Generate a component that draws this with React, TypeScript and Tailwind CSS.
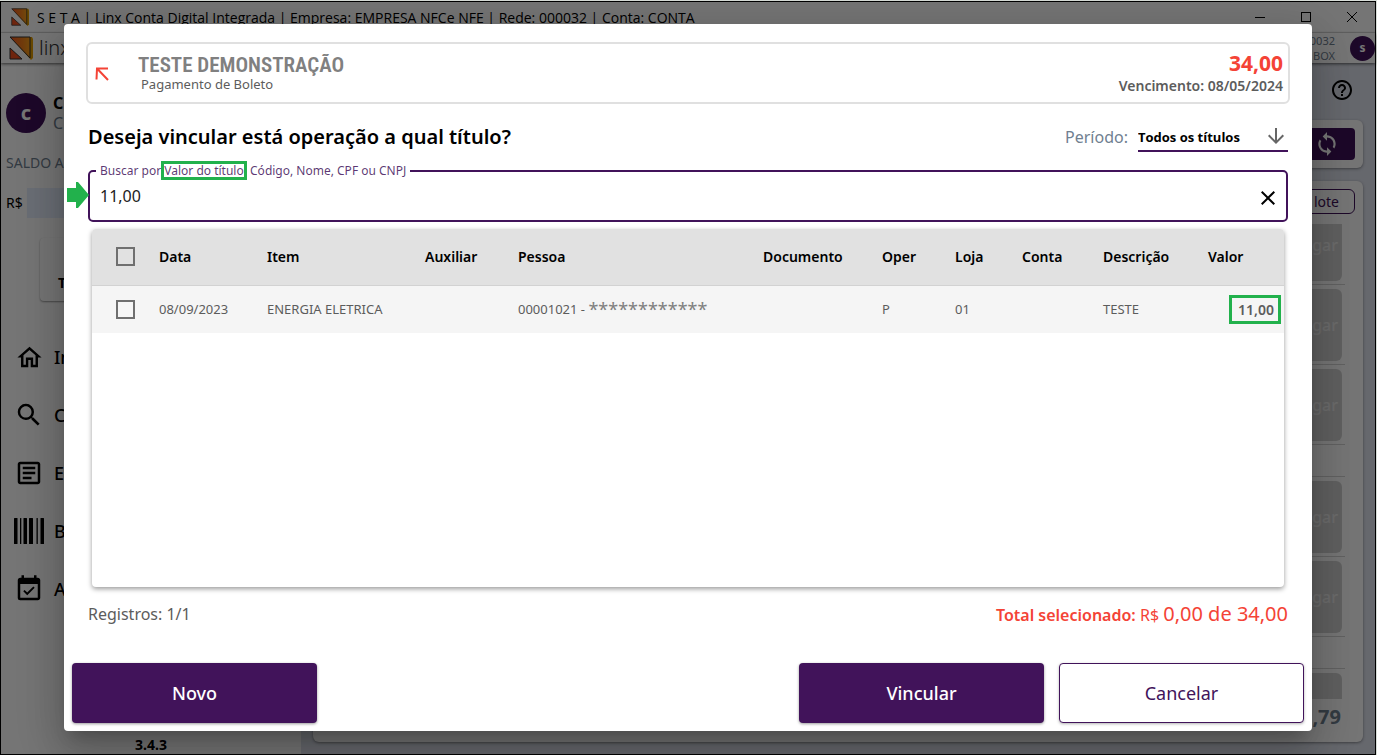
import { useState } from "react";
import {
  MdArrowDownward,
  MdClose,
  MdEventAvailable,
  MdHelpOutline,
  MdOutlineArticle,
  MdOutlineHome,
  MdSearch,
  MdSync,
} from "react-icons/md";

function LinxLogo({ className }: { className: string }) {
  return (
    <svg viewBox="0 0 24 24" className={className} aria-hidden="true">
      <defs>
        <linearGradient id="linx" x1="0" y1="0" x2="1" y2="0">
          <stop offset="0" stopColor="#f0501e" />
          <stop offset="1" stopColor="#f9a01b" />
        </linearGradient>
      </defs>
      <path d="M3 1H23L24 3V22L22 24L3 3Z" fill="#e8a000" />
      <path d="M1 1H21V22Z" fill="url(#linx)" stroke="#333" strokeWidth="1" />
      <path d="M1 12L13 23H1Z" fill="#f0501e" stroke="#333" strokeWidth="1" />
    </svg>
  );
}

function BarcodeIcon() {
  return (
    <svg width="30" height="26" viewBox="0 0 30 26" fill="currentColor" aria-hidden="true">
      <rect x="0" width="3.5" height="26" rx="0.5" />
      <rect x="6" width="1.3" height="26" rx="0.5" />
      <rect x="9.5" width="3.5" height="26" rx="0.5" />
      <rect x="15" width="4" height="26" rx="0.5" />
      <rect x="22.5" width="1.3" height="26" rx="0.5" />
      <rect x="26.5" width="3.5" height="26" rx="0.5" />
    </svg>
  );
}

function TitleBar() {
  return (
    <header className="flex h-[31px] shrink-0 items-center border-b border-[#e4e4e4] bg-white pl-[10px]">
      <LinxLogo className="size-[18px]" />
      <span className="ml-2 pt-[2px] font-['Open_Sans',sans-serif] text-sm whitespace-nowrap text-black">
        S E T A | Linx Conta Digital Integrada | Empresa: EMPRESA NFCe NFE | Rede: 000032 | Conta: CONTA
      </span>
      <div className="ml-auto flex">
        <button aria-label="Minimizar" className="grid h-[30px] w-[46px] place-items-center">
          <svg width="12" height="12" stroke="#000" fill="none"><path d="M1 6.5H11" /></svg>
        </button>
        <button aria-label="Maximizar" className="grid h-[30px] w-[46px] place-items-center">
          <svg width="12" height="12" stroke="#000" fill="none"><rect x="1.5" y="1.5" width="9" height="9" /></svg>
        </button>
        <button aria-label="Fechar" className="grid h-[30px] w-[46px] place-items-center">
          <svg width="12" height="12" stroke="#000" fill="none"><path d="M1 1L11 11M11 1L1 11" /></svg>
        </button>
      </div>
    </header>
  );
}

function AppBar() {
  return (
    <div className="z-10 flex h-[30px] shrink-0 items-center bg-white pl-2 shadow-[0_1px_3px_rgba(0,0,0,0.6)]">
      <LinxLogo className="size-6" />
      <span className="ml-[6px] text-xl font-light text-[#333]">linx</span>
      <div className="ml-auto text-right text-[11px] leading-[15px] text-[#708090]">
        <div>000032</div>
        <div>BOX</div>
      </div>
      <span className="ml-[15px] grid size-[25px] place-items-center rounded-full bg-[#41135a] text-xs font-bold text-white">
        s
      </span>
    </div>
  );
}

const menu = [
  { label: "In", icon: <MdOutlineHome size={29} /> },
  { label: "C", icon: <MdSearch size={30} /> },
  { label: "E", icon: <MdOutlineArticle size={30} /> },
  { label: "B", icon: <BarcodeIcon /> },
  { label: "A", icon: <MdEventAvailable size={30} /> },
];

function Sidebar() {
  return (
    <aside className="flex w-[300px] shrink-0 flex-col bg-white shadow-[1px_0_3px_rgba(0,0,0,0.35)]">
      <div className="mt-[30px] ml-[5px] flex items-center">
        <span className="grid size-10 place-items-center rounded-full bg-[#41135a] text-xl font-bold text-white">c</span>
        <div className="ml-[7px] leading-5">
          <div className="font-bold text-black">C</div>
          <div className="text-base leading-5 text-[#708090]">C</div>
        </div>
      </div>
      <div className="mt-5 ml-[5px] text-sm leading-5 text-[#708090]">SALDO A</div>
      <div className="mt-[15px] ml-[5px] flex items-center text-sm">
        <span className="w-[21px]">R$</span>
        <span className="h-[30px] w-48 bg-[#e8f0fe]" />
      </div>
      <div className="mt-5 ml-[39px] flex h-[63px] w-[220px] items-end rounded bg-white pb-2 pl-[18px] text-sm font-bold shadow-[0_1px_2px_rgba(0,0,0,0.4)]">
        T
      </div>
      <nav className="mt-[27px] flex flex-col">
        {menu.map((item) => (
          <a key={item.label} href="#" className="flex h-[58px] items-center pl-[13px] text-black">
            <span className="grid w-[30px] place-items-center">{item.icon}</span>
            <span className="ml-[10px] text-lg font-medium">{item.label}</span>
          </a>
        ))}
      </nav>
      <div className="mt-auto text-center text-sm leading-[18px] font-bold text-black">3.4.3</div>
    </aside>
  );
}

function PayRow() {
  return (
    <div className="mr-[18px] flex h-20 items-center justify-end border-b border-[#d4d4d4] pr-[3px]">
      <button className="h-[72px] w-24 rounded-md bg-[#d2d2d2] pr-1 text-right text-base font-medium text-[#ebebeb]">
        Pagar
      </button>
    </div>
  );
}

function MainArea() {
  return (
    <main className="flex min-w-0 flex-1 flex-col bg-[#dee2ed] pr-3 pb-3 pl-3">
      <div className="flex h-[57px] shrink-0 items-center justify-end pr-[9px] pb-1">
        <MdHelpOutline size={24} />
      </div>
      <div className="flex h-12 shrink-0 items-center justify-end rounded-md bg-white pr-2 shadow-[0_1px_3px_rgba(0,0,0,0.4)]">
        <button aria-label="Atualizar" className="grid h-8 w-14 place-items-center rounded bg-[#41135a] text-white">
          <MdSync size={26} />
        </button>
      </div>
      <section className="mt-[13px] flex min-h-0 flex-1 flex-col rounded-md bg-white shadow-[0_1px_3px_rgba(0,0,0,0.4)]">
        <div className="flex justify-end pt-2 pr-2">
          <button className="h-[25px] w-24 rounded-md border border-[#41135a] pr-[15px] text-right text-sm text-[#41135a]">
            lote
          </button>
        </div>
        <div className="mt-[10px] min-h-0 flex-1 overflow-hidden">
          <div className="-mt-[19px]">
            <PayRow />
            <PayRow />
            <PayRow />
            <div className="mr-[18px] h-8 border-b border-[#d4d4d4]" />
            <PayRow />
            <PayRow />
            <div className="mr-[18px] h-8 border-b border-[#d4d4d4]" />
            <div className="mr-[21px] ml-auto mt-1 h-[72px] w-24 rounded-md bg-[#d2d2d2]" />
          </div>
        </div>
        <div className="h-[43px] pr-[22px] text-right text-xl leading-9 font-bold text-[#708090]">,79</div>
      </section>
    </main>
  );
}

const headings = ["Data", "Item", "Auxiliar", "Pessoa", "Documento", "Oper", "Loja", "Conta", "Descrição", "Valor"];

const checkbox =
  "block size-[19px] appearance-none border-2 border-[#6f6f6f] checked:bg-[#41135a]";

function TitlesTable() {
  return (
    <div className="mx-1 mt-[7px] min-h-0 flex-1 overflow-hidden rounded-[4px] bg-white shadow-[0_2px_5px_rgba(0,0,0,0.4)]">
      <table className="w-full table-fixed border-collapse text-left text-[13px]">
        <colgroup>
          <col className="w-[67px]" />
          <col className="w-[108px]" />
          <col className="w-[158px]" />
          <col className="w-[93px]" />
          <col />
          <col className="w-[119px]" />
          <col className="w-[73px]" />
          <col className="w-[67px]" />
          <col className="w-[81px]" />
          <col className="w-[105px]" />
          <col className="w-[76px]" />
        </colgroup>
        <thead>
          <tr className="h-14 border-b border-[#d2d2d2] bg-[#e1e1e1] text-black">
            <th className="pl-6">
              <input type="checkbox" aria-label="Selecionar todos" className={checkbox} />
            </th>
            {headings.map((h) => (
              <th key={h} className="text-sm font-semibold">{h}</th>
            ))}
          </tr>
        </thead>
        <tbody>
          <tr className="h-12 bg-[#f5f5f5] text-[#5c5c5c]">
            <td className="pl-6">
              <input type="checkbox" aria-label="Selecionar título" className={checkbox} />
            </td>
            <td>08/09/2023</td>
            <td>ENERGIA ELETRICA</td>
            <td />
            <td className="whitespace-nowrap">
              <span className="flex items-center">
                00001021 -&nbsp;<span className="text-lg leading-5 text-[#808080]">************</span>
              </span>
            </td>
            <td />
            <td>P</td>
            <td>01</td>
            <td />
            <td>TESTE</td>
            <td className="pr-[3px]">
              <span className="ml-auto block w-[52px] border-3 border-[#22b14c] pr-1 text-right text-sm leading-[23px] font-semibold">
                11,00
              </span>
            </td>
          </tr>
        </tbody>
      </table>
    </div>
  );
}

function LinkDialog() {
  const [query, setQuery] = useState("11,00");
  return (
    <div
      role="dialog"
      aria-modal="true"
      className="flex w-full flex-col rounded bg-white shadow-[0_11px_15px_-7px_rgba(0,0,0,0.2),0_24px_38px_3px_rgba(0,0,0,0.14),0_9px_46px_8px_rgba(0,0,0,0.12)]"
    >
      <div className="mx-[22px] mt-[18px] flex h-[62px] shrink-0 items-center rounded-md border-2 border-[#e0e0e0] pt-[2px] pr-[5px] pl-[7px]">
        <svg width="14" height="14" fill="none" stroke="#f44336" strokeWidth="2" aria-hidden="true">
          <path d="M1.5 12.5L2 1.5H13M2 1.5L13 13" />
        </svg>
        <div className="ml-[29px]">
          <div className="font-['Roboto_Condensed','Liberation_Sans_Narrow',sans-serif] text-[21px] leading-5 font-semibold text-[#808080]">
            TESTE DEMONSTRAÇÃO
          </div>
          <div className="ml-[3px] text-[13px] leading-[18px] text-[#5c5c5c]">Pagamento de Boleto</div>
        </div>
        <div className="ml-auto text-right">
          <div className="text-[21px] leading-6 font-bold text-[#f44336]">34,00</div>
          <div className="text-sm leading-[22px] font-semibold text-[#5c5c5c]">Vencimento: 08/05/2024</div>
        </div>
      </div>

      <div className="mx-6 flex h-[66px] shrink-0 items-center justify-between">
        <h1 className="text-xl font-semibold text-black">Deseja vincular está operação a qual título?</h1>
        <div className="flex items-center">
          <label htmlFor="periodo" className="text-base text-[#708090]">Período:</label>
          <div className="relative ml-[10px] w-[150px] border-b-2 border-[#41135a]">
            <select
              id="periodo"
              className="h-[28px] w-full appearance-none bg-transparent pt-[3px] font-['Open_Sans',sans-serif] text-[13px] font-bold text-black outline-none"
            >
              <option>Todos os títulos</option>
            </select>
            <MdArrowDownward size={24} className="pointer-events-none absolute top-0.5 right-0 text-[#666]" />
          </div>
        </div>
      </div>

      <div className="relative mx-6 flex h-[52px] shrink-0 items-center rounded-[5px] border-2 border-[#41135a] pl-[10px] pr-[6px]">
        <label
          htmlFor="busca"
          className="absolute -top-[10px] left-[6px] bg-white px-1 text-xs leading-[18px] whitespace-nowrap text-[#41135a]/85"
        >
          Buscar por{" "}
          <span className="relative">
            Valor do título,
            <span className="absolute -inset-y-px right-0 -left-[3px] border-3 border-[#22b14c]" />
          </span>{" "}
          Código, Nome, CPF ou CNPJ
        </label>
        <input
          id="busca"
          value={query}
          onChange={(e) => setQuery(e.target.value)}
          className="min-w-0 flex-1 bg-transparent text-base text-[#222] outline-none"
        />
        <button aria-label="Limpar busca" onClick={() => setQuery("")} className="pt-1 text-black">
          <MdClose size={24} />
        </button>
        <svg viewBox="0 0 22 26" className="absolute top-[10px] -left-[23px] h-[26px] w-[22px]" aria-hidden="true">
          <path d="M0 6H9V0H11L22 13L11 26H9V20H0Z" fill="#22b14c" />
        </svg>
      </div>

      <div className="mx-6 flex min-h-0 flex-1 flex-col">
        <TitlesTable />
        <div className="flex h-[54px] shrink-0 items-center justify-between">
          <span className="text-base text-[#5c5c5c]">Registros: 1/1</span>
          <span className="text-base text-[#f44336]">
            <span className="font-semibold">Total selecionado:</span> R$ <span className="text-xl">0,00 de 34,00</span>
          </span>
        </div>
      </div>

      <div className="mt-[22px] flex shrink-0 gap-[15px] px-2 pb-2 text-lg">
        <button className="mr-auto h-[60px] w-[245px] rounded bg-[#41135a] font-medium text-white shadow-[0_1px_3px_rgba(0,0,0,0.4)]">
          Novo
        </button>
        <button className="h-[60px] w-[245px] rounded bg-[#41135a] font-medium text-white shadow-[0_1px_3px_rgba(0,0,0,0.4)]">
          Vincular
        </button>
        <button className="h-[60px] w-[245px] rounded border border-[#41135a] bg-white text-[#41135a] shadow-[0_1px_3px_rgba(0,0,0,0.3)]">
          Cancelar
        </button>
      </div>
    </div>
  );
}

export default function App() {
  return (
    <div className="relative flex h-screen min-h-[600px] flex-col overflow-hidden bg-[#d8ddd8] pt-px pr-px font-['Noto_Sans','Open_Sans',sans-serif]">
      <div className="flex min-h-0 flex-1 flex-col border border-black">
        <TitleBar />
        <AppBar />
        <div className="flex min-h-0 flex-1">
          <Sidebar />
          <MainArea />
        </div>
      </div>
      <div className="absolute inset-0 top-px right-px z-20 flex bg-black/54 px-16 pt-[23px] pb-6">
        <LinkDialog />
      </div>
    </div>
  );
}
